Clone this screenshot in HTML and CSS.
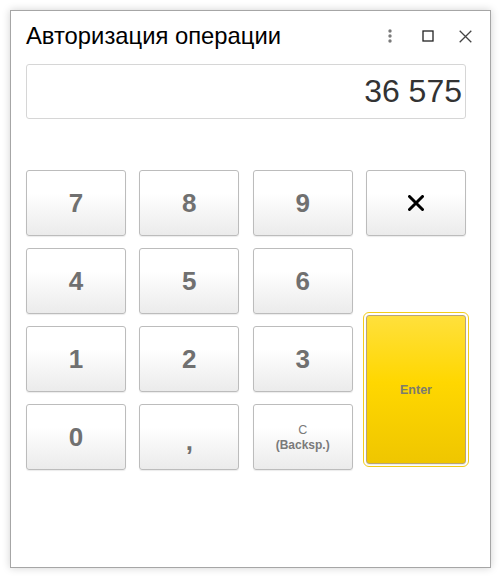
FILE: index.html
```html
<!DOCTYPE html>
<html lang="ru">
<head>
<meta charset="utf-8">
<title>Авторизация операции</title>
<link rel="stylesheet" href="styles.css">
</head>
<body>
<div class="window">
  <div class="header">
    <div class="title">Авторизация операции</div>
    <div class="tools">
      <span class="tool">
        <svg width="4" height="14" viewBox="0 0 4 14"><circle cx="2" cy="2" r="1.7" fill="#7a7a7a"/><circle cx="2" cy="7" r="1.7" fill="#7a7a7a"/><circle cx="2" cy="12" r="1.7" fill="#7a7a7a"/></svg>
      </span>
      <span class="tool">
        <svg width="12" height="12" viewBox="0 0 12 12"><rect x="1" y="1" width="10" height="10" fill="none" stroke="#222" stroke-width="1.3"/></svg>
      </span>
      <span class="tool">
        <svg width="13" height="13" viewBox="0 0 13 13"><path d="M0.7 0.7 L12.3 12.3 M12.3 0.7 L0.7 12.3" stroke="#444" stroke-width="1.3" fill="none"/></svg>
      </span>
    </div>
  </div>
  <div class="content">
    <div class="field">36 575</div>
    <div class="keypad">
      <div class="key">7</div>
      <div class="key">8</div>
      <div class="key">9</div>
      <div class="key">
        <svg width="16" height="16" viewBox="0 0 16 16"><path d="M1.5 1.5 L14.5 14.5 M14.5 1.5 L1.5 14.5" stroke="#000" stroke-width="3" stroke-linecap="round" fill="none"/></svg>
      </div>
      <div class="key">4</div>
      <div class="key">5</div>
      <div class="key">6</div>
      <div class="enter-wrap"><div class="key enter">Enter</div></div>
      <div class="key">1</div>
      <div class="key">2</div>
      <div class="key">3</div>
      <div class="key">0</div>
      <div class="key comma">,</div>
      <div class="key small"><span class="c">C</span><span>(Backsp.)</span></div>
    </div>
  </div>
</div>
</body>
</html>
```
FILE: styles.css
```css
html, body {
  margin: 0;
  padding: 0;
  background: #fff;
}
body {
  font-family: "Liberation Sans", Arial, sans-serif;
  width: 500px;
  height: 578px;
  overflow: hidden;
}
.window {
  margin: 10px 0 0 10px;
  width: 479px;
  height: 556px;
  border: 1px solid #a6a6a6;
  background: #fff;
  box-shadow: 0 0 8px rgba(0, 0, 0, 0.18);
}
.header {
  display: flex;
  align-items: center;
  justify-content: space-between;
  height: 28px;
  margin-top: 11px;
  padding: 0 14px 0 15px;
}
.title {
  font-size: 23.8px;
  line-height: 28px;
  color: #000;
}
.tools {
  display: flex;
  gap: 15.5px;
}
.tool {
  width: 22px;
  height: 22px;
  display: flex;
  align-items: center;
  justify-content: center;
}
.content {
  padding: 0 24px 0 15px;
}
.field {
  margin-top: 14px;
  height: 53px;
  border: 1px solid #d6d6d6;
  border-radius: 3px;
  display: flex;
  align-items: center;
  justify-content: flex-end;
  padding-right: 3px;
  font-size: 32px;
  color: #333;
}
.keypad {
  margin-top: 51px;
  display: grid;
  grid-template-columns: repeat(4, 100px);
  grid-auto-rows: 66px;
  column-gap: 13.33px;
  row-gap: 12px;
}
.key {
  box-sizing: border-box;
  border: 1px solid #bcbcbc;
  border-radius: 3px;
  background: linear-gradient(#ffffff 35%, #ebebeb);
  box-shadow: 0 1px 1px rgba(0, 0, 0, 0.08);
  display: flex;
  align-items: center;
  justify-content: center;
  font-size: 26px;
  font-weight: bold;
  color: #707070;
}
.comma {
  padding-top: 8px;
}
.small {
  flex-direction: column;
  font-size: 12px;
  line-height: 15px;
  color: #7a7a7a;
  padding-top: 2px;
}
.small .c {
  font-weight: normal;
  font-size: 12.5px;
}
.enter-wrap {
  grid-column: 4;
  grid-row: 2 / 5;
  align-self: end;
  margin-bottom: 6px;
  height: 149px;
  display: flex;
}
.enter {
  flex: 1;
  border-color: #b7a47a;
  background: linear-gradient(#ffe03c, #ffd700 45%, #efc600);
  outline: 1px solid #f2cc1a;
  outline-offset: 2px;
  font-size: 12.5px;
  color: #7c7c6e;
}
```
